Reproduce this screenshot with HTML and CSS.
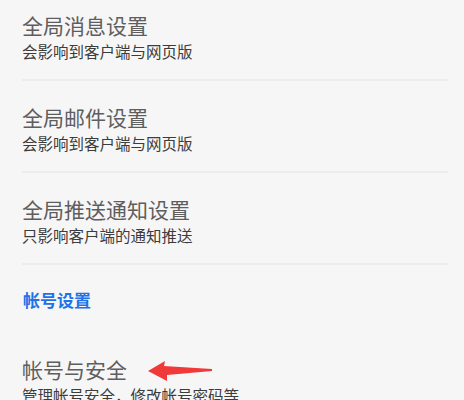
FILE: index.html
```html
<!DOCTYPE html>
<html lang="zh-CN">
<head>
  <meta charset="UTF-8" />
  <meta name="viewport" content="width=device-width, initial-scale=1.0"/>
  <title>设置</title>
  <link rel="stylesheet" href="styles.css">
</head>
<body>
<div class="settings">
  <ul class="group">
    <li class="item first">
      <div class="title">全局消息设置</div>
      <div class="desc">会影响到客户端与网页版</div>
    </li>
    <li class="item">
      <div class="title">全局邮件设置</div>
      <div class="desc">会影响到客户端与网页版</div>
    </li>
    <li class="item">
      <div class="title">全局推送通知设置</div>
      <div class="desc">只影响客户端的通知推送</div>
    </li>
  </ul>

  <h3 class="group-title">帐号设置</h3>

  <ul class="group">
    <li class="item plain">
      <div class="title">帐号与安全<svg class="arrow" width="66" height="22" viewBox="0 0 66 22"><polygon points="1,11 18,1 17,6 65,9 65,11 20,15 20,21" fill="#f03a3a"/></svg></div>
      <div class="desc">管理帐号安全，修改帐号密码等</div>
    </li>
  </ul>
</div>
</body>
</html>
```

FILE: styles.css
```css
body {
  margin: 0;
  background-color: #f6f6f6;
  font-family: "Noto Sans CJK SC", "Noto Sans", sans-serif;
  overflow: hidden;
}

.settings {
  padding: 0 16px 0 22px;
}

.group {
  list-style-type: none;
  margin: 0;
  padding: 0;
}

.item {
  padding: 23px 0 18px;
  border-bottom: 2px solid #ececec;
}

.item.first {
  padding-top: 12px;
}

.item.plain {
  border-bottom: none;
}

.title {
  font-size: 21px;
  line-height: 26px;
  color: #5e5e5e;
  display: flex;
  align-items: center;
}

.desc {
  margin-top: 3px;
  font-size: 15.5px;
  line-height: 20px;
  color: #3c3c3c;
}

.arrow {
  margin-left: 20px;
  margin-top: 3px;
}

.group-title {
  margin: 0;
  padding: 23px 0 21px 1px;
  font-size: 17px;
  line-height: 24px;
  font-weight: bold;
  color: #2171e8;
}
```
